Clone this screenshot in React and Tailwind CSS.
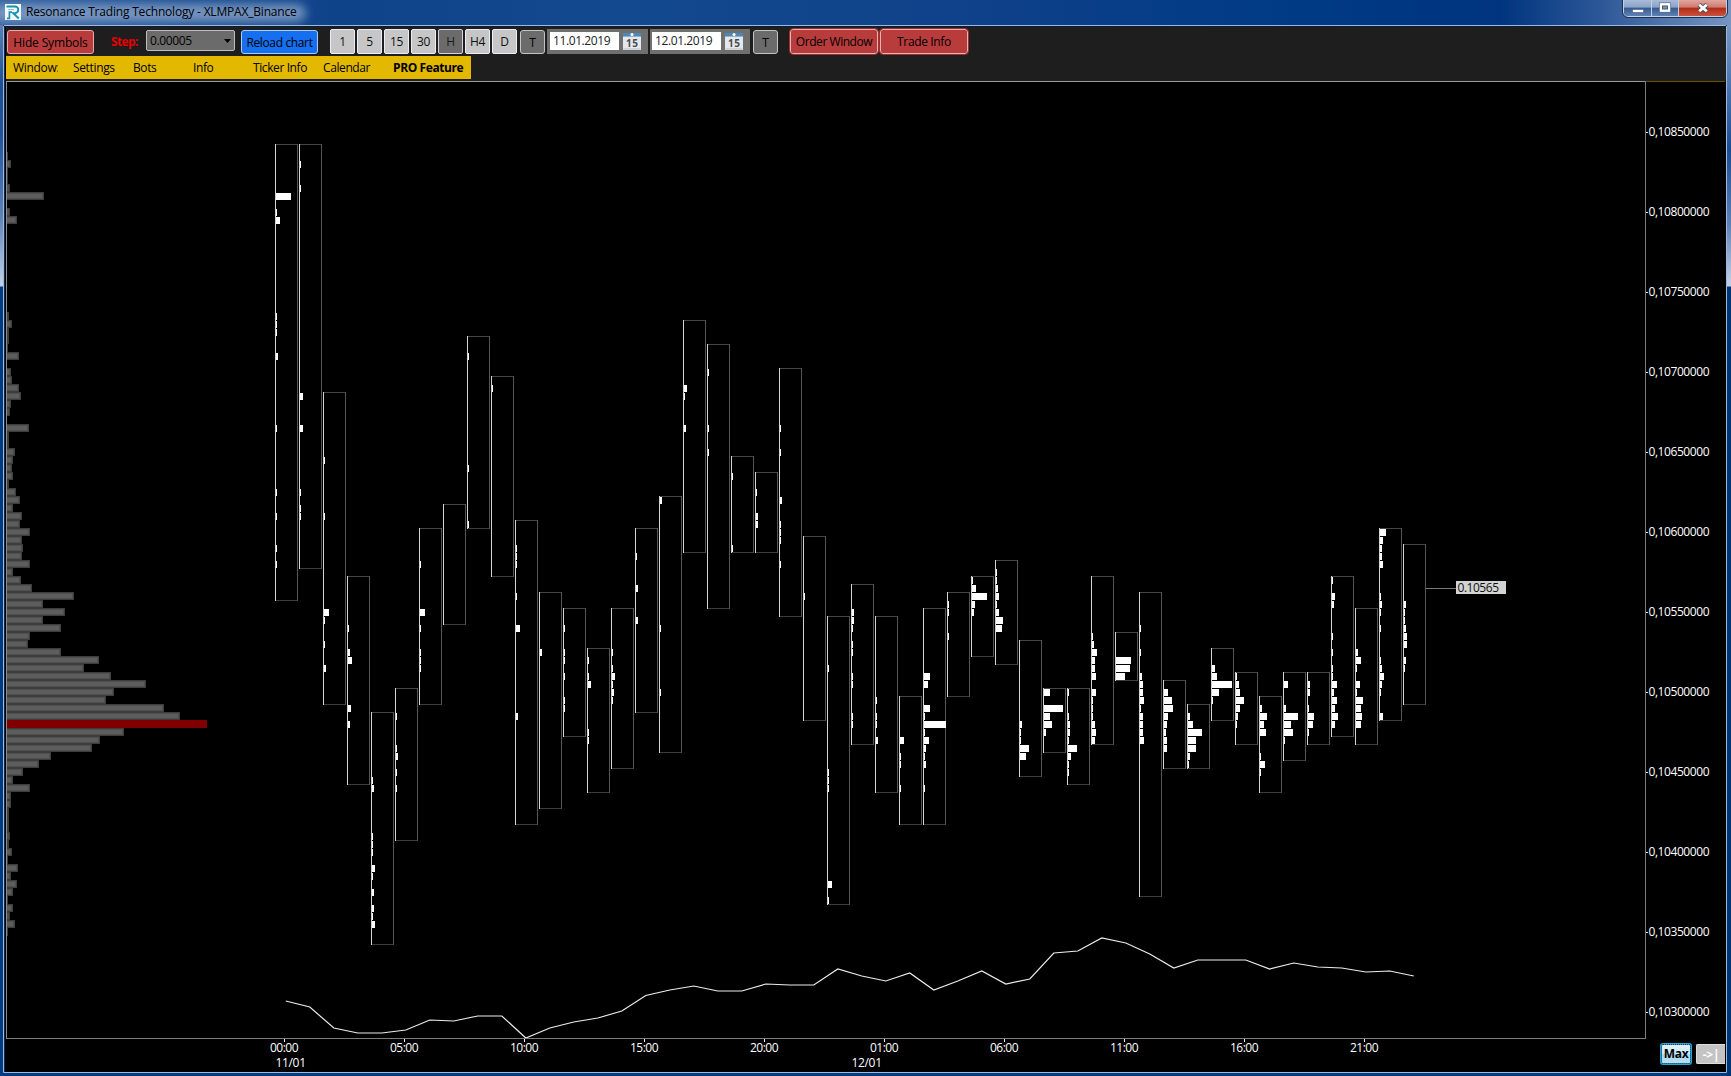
import React from "react";

const ROW_H = 8;
const ROW_TOP = 128;
const COL_W = 24;
const COL_LEFT = 275;

// [first row, last row, [row, width, row, width, ...]]
const CLUSTERS = [
  [2, 59, [8, 15, 10, 1, 11, 4, 23, 1, 24, 1, 25, 1, 28, 2, 37, 1, 45, 1, 48, 1, 52, 1, 54, 1]],
  [2, 55, [4, 1, 7, 1, 33, 3, 37, 3, 45, 1, 47, 1, 48, 1]],
  [33, 72, [41, 1, 48, 1, 60, 5, 61, 1, 64, 1, 67, 2]],
  [56, 82, [62, 1, 65, 2, 66, 4, 72, 3, 74, 2]],
  [73, 102, [81, 1, 82, 2, 88, 1, 89, 1, 90, 1, 92, 3, 93, 1, 95, 2, 97, 2, 98, 1, 99, 3]],
  [70, 89, [73, 1, 77, 1, 78, 2, 80, 1, 82, 1]],
  [50, 72, [54, 1, 60, 5, 62, 1, 65, 1, 66, 1, 67, 1]],
  [47, 62, []],
  [26, 50, [28, 1, 42, 1, 49, 1]],
  [31, 56, [32, 1]],
  [49, 87, [52, 1, 53, 1, 54, 1, 58, 1, 62, 4, 73, 2]],
  [58, 85, [65, 2]],
  [60, 76, [62, 1, 65, 1, 66, 1, 68, 1, 71, 1, 72, 1]],
  [65, 83, [66, 1, 68, 1, 69, 3, 75, 1, 76, 1]],
  [60, 80, [65, 1, 67, 1, 68, 3, 69, 1, 70, 2, 71, 1]],
  [50, 73, [53, 1, 57, 2, 61, 2]],
  [46, 78, [46, 2, 62, 1, 70, 1]],
  [24, 53, [32, 3, 33, 1, 37, 2]],
  [27, 60, [30, 1, 37, 1, 40, 1]],
  [41, 53, [43, 1, 52, 1]],
  [43, 53, [45, 1, 48, 2, 49, 2]],
  [30, 61, [37, 1, 40, 1, 46, 2, 49, 1, 50, 1, 51, 1, 54, 1]],
  [51, 74, [58, 1]],
  [61, 97, [67, 1, 80, 1, 81, 1, 82, 1, 94, 4, 96, 1]],
  [57, 77, [60, 2, 61, 2, 62, 1, 64, 1, 65, 1, 68, 1, 69, 1, 73, 1, 74, 1]],
  [61, 83, [71, 1, 73, 1, 74, 1, 76, 2]],
  [71, 87, [76, 4, 78, 1, 79, 1, 82, 1]],
  [60, 87, [68, 6, 69, 4, 72, 6, 73, 1, 74, 22, 75, 1, 76, 5, 77, 2, 78, 1, 79, 2, 82, 1]],
  [58, 71, [59, 1, 60, 1, 63, 1]],
  [56, 66, [56, 1, 57, 4, 58, 15, 59, 3, 60, 2]],
  [54, 67, [55, 1, 56, 1, 57, 2, 58, 3, 59, 1, 60, 3, 61, 7, 62, 6]],
  [64, 81, [74, 2, 75, 1, 76, 1, 77, 9, 78, 6]],
  [70, 78, [70, 6, 72, 19, 73, 6, 74, 8, 75, 2]],
  [70, 82, [70, 1, 73, 1, 74, 2, 75, 2, 76, 1, 77, 9, 78, 3, 79, 1, 80, 1]],
  [56, 77, [63, 1, 64, 2, 65, 5, 66, 3, 67, 3, 68, 4, 70, 4, 71, 1, 72, 1, 73, 1, 74, 3, 75, 4, 76, 3]],
  [63, 69, [66, 15, 67, 14, 68, 9]],
  [58, 96, [62, 1, 65, 1, 68, 2, 69, 3, 70, 3, 71, 4, 72, 1, 73, 3, 74, 3, 75, 3, 76, 4]],
  [69, 80, [70, 4, 71, 8, 72, 9, 73, 4, 74, 3, 75, 2, 76, 3, 77, 3]],
  [72, 80, [73, 2, 74, 5, 75, 14, 76, 8, 77, 8, 78, 2, 79, 1]],
  [65, 74, [67, 3, 68, 5, 69, 20, 70, 7, 71, 1]],
  [68, 77, [68, 1, 69, 3, 70, 4, 71, 8, 72, 4, 73, 2, 74, 1]],
  [71, 83, [72, 2, 73, 7, 74, 4, 75, 6, 78, 1, 79, 5, 80, 1]],
  [68, 79, [69, 4, 72, 2, 73, 14, 74, 7, 75, 9, 76, 1]],
  [68, 77, [69, 2, 70, 2, 72, 1, 73, 6, 74, 5, 75, 1]],
  [56, 76, [56, 1, 58, 3, 59, 2, 63, 1, 65, 1, 67, 1, 68, 1, 69, 5, 70, 2, 71, 5, 72, 3, 73, 6, 74, 3]],
  [60, 77, [65, 2, 66, 5, 67, 1, 69, 4, 70, 1, 71, 7, 72, 5, 73, 6, 74, 5]],
  [50, 74, [50, 6, 51, 3, 52, 2, 53, 2, 54, 3, 58, 1, 59, 2, 60, 1, 62, 1, 66, 1, 67, 2, 68, 4, 69, 2, 70, 1, 73, 3]],
  [52, 72, [59, 2, 60, 1, 61, 1, 62, 2, 63, 3, 64, 3, 66, 2, 67, 1]],
];

// volume per price row, starting at row 3
const PROFILE = [
  1, 4, 1, 1, 3, 37, 0, 3, 10, 0, 0, 0, 0, 0, 0, 0, 0, 0, 0, 0, 2, 5, 2, 2, 1,
  12, 0, 4, 5, 12, 14, 4, 3, 0, 22, 2, 2, 8, 6, 5, 6, 2, 9, 13, 6, 15, 13, 23,
  15, 16, 15, 23, 6, 14, 25, 67, 36, 58, 36, 54, 23, 21, 54, 92, 77, 104, 139,
  107, 99, 157, 173, 200, 117, 93, 85, 44, 32, 16, 6, 23, 4, 4, 2, 2, 2, 3, 2,
  5, 1, 11, 4, 10, 6, 1, 6, 3, 8, 1,
];

const DELTA = [
  1001, 1007, 1028, 1033, 1033, 1030, 1020, 1021, 1016, 1016, 1038, 1028,
  1022, 1018, 1011, 995.5, 990, 986, 991, 991, 984, 985, 985, 969, 976, 981,
  973, 990, 981, 971, 984, 979, 953, 951, 938, 943, 954, 968, 960, 960, 960,
  969, 963, 967, 968, 972, 971, 976,
];

const HOURS = ["00:00", "05:00", "10:00", "15:00", "20:00", "01:00", "06:00", "11:00", "16:00", "21:00"];

const PRICES = [
  "0,10850000",
  "0,10800000",
  "0,10750000",
  "0,10700000",
  "0,10650000",
  "0,10600000",
  "0,10550000",
  "0,10500000",
  "0,10450000",
  "0,10400000",
  "0,10350000",
  "0,10300000",
];

export default function App() {
  return (
    <div className="flex h-[1076px] w-[1731px] flex-col overflow-hidden bg-[#003a80] font-['Open_Sans','Noto_Sans',sans-serif] text-[12px] text-black">
      <TitleBar />
      <div className="flex h-[1051px]">
        <div className="h-full w-[3px] bg-[linear-gradient(180deg,#5b80b4_0px,#1c4f93_60px,#22539a_110px,#5c81b6_190px,#b4c6e0_250px,#c2d0e6_261px,#003c82_262px)]" />
        <div className="flex h-[1048px] w-[1724px] flex-col rounded-t-[2px] border border-[#9fb9dc] bg-black">
          <div className="h-px bg-[#0b1c38]" />
          <div className="flex h-full border-l border-[#0a2a58] pl-px">
            <div className="flex w-[1720px] flex-col">
              <Toolbar />
              <Menu />
              <div className="flex h-[990px]">
                <ClusterChart />
                <PriceScale />
              </div>
            </div>
          </div>
        </div>
        <div className="h-full w-[4px] bg-[linear-gradient(180deg,#7797c4_0px,#4c76b0_60px,#1a4c92_125px,#5d82b7_200px,#b4c6e0_250px,#c2d0e6_261px,#003575_262px)]" />
      </div>
    </div>
  );
}

const TitleBar = () => (
  <div className="relative flex h-[25px] items-start justify-between overflow-hidden bg-[linear-gradient(90deg,#2f5f9f_0px,#0f4389_330px,#13498f_620px,#0e4189_980px,#003a85_1300px,#00347e_1500px,#2c5797_1600px,#7794c0_1731px)]">
    <div className="absolute top-[4px] -left-2 h-[18px] w-[314px] rounded-full bg-[#8ba5cb]/80 blur-[5px]" />
    <div className="relative flex items-center pt-1 pl-[5px]">
      <Logo />
      <span className="ml-[5px] text-[12px] leading-4 tracking-[-0.19px] whitespace-nowrap">
        Resonance Trading Technology - XLMPAX_Binance
      </span>
    </div>
    <WindowButtons />
  </div>
);

const Logo = () => (
  <svg width="16" height="16" viewBox="0 0 16 16">
    <rect width="16" height="16" fill="#f4f8fa" />
    <path d="M1.5 2.5H10a3.3 3.3 0 0 1 0 6.6H8.2l5.6 5.4" fill="none" stroke="#1593b5" strokeWidth="1.9" />
    <path d="M2 14.3h2.4V8.2H7" fill="none" stroke="#1593b5" strokeWidth="1.7" />
    <path d="M3 5.6h6" stroke="#7cc3d6" strokeWidth="1" />
  </svg>
);

const WindowButtons = () => (
  <div className="relative mr-[4px] flex h-[17px] overflow-hidden rounded-b-[5px] border border-t-0 border-[#c3d1e6] text-white outline outline-[#1c3158]">
    <div className="flex w-[28px] items-center justify-center border-r border-[#c3d1e6] bg-[linear-gradient(180deg,#a9bbd8_0%,#8ba3c8_45%,#365a90_50%,#5f82b4_100%)]">
      <svg width="12" height="10" viewBox="0 0 12 10">
        <rect x="0.5" y="6.5" width="11" height="3" fill="#fff" stroke="#46587a" strokeWidth="0.6" />
      </svg>
    </div>
    <div className="flex w-[27px] items-center justify-center border-r border-[#c3d1e6] bg-[linear-gradient(180deg,#a9bbd8_0%,#8ba3c8_45%,#365a90_50%,#5f82b4_100%)]">
      <svg width="12" height="12" viewBox="0 0 12 12">
        <rect x="0.3" y="0.8" width="11.4" height="9.4" fill="#fff" stroke="#46587a" strokeWidth="0.6" />
        <rect x="3.5" y="4" width="5" height="3" fill="#7894bd" stroke="#46587a" />
      </svg>
    </div>
    <div className="flex w-[47px] items-center justify-center bg-[linear-gradient(180deg,#dfa79f_0%,#cf7a6c_45%,#b02c17_50%,#c9523c_100%)]">
      <svg width="12" height="11" viewBox="0 0 12 11">
        <path d="M2 1.5l8 7M10 1.5l-8 7" stroke="#4f4c5c" strokeWidth="4.4" />
        <path d="M2.2 1.7l7.6 6.6M9.8 1.7L2.2 8.3" stroke="#fff" strokeWidth="2.8" />
      </svg>
    </div>
  </div>
);

const Toolbar = () => (
  <div className="flex h-[29px] items-start bg-[#1e1e1e] pt-[2px] pl-px">
    <button className="mt-px h-[24px] w-[87px] rounded-[3px] border border-[#e9a9a9] bg-[#b83c3c] text-[12px] leading-[23px] tracking-[-0.15px] whitespace-nowrap">
      Hide Symbols
    </button>
    <span className="ml-[17px] w-[35px] pt-[5px] text-[12px] leading-4 font-bold tracking-[-0.6px] text-[#e60000]">
      Step:
    </span>
    <div className="mt-px flex h-[21px] w-[89px] items-center justify-between rounded-[2px] border border-[#bdbdbd] bg-[#6b6b6b] pr-[3px] pl-[3px]">
      <span className="tracking-[-0.35px]">0.00005</span>
      <svg width="7" height="4" viewBox="0 0 7 4">
        <path d="M0 0h7L3.5 4z" fill="#000" />
      </svg>
    </div>
    <button className="mt-px ml-[6px] h-[24px] w-[77px] rounded-[3px] border border-[#a9cbf5] bg-[#156fee] text-[12px] leading-[23px] tracking-[-0.36px] whitespace-nowrap">
      Reload chart
    </button>
    <div className="ml-[12px] flex gap-[2px]">
      <Period label="1" />
      <Period label="5" />
      <Period label="15" />
      <Period label="30" />
      <Period label="H" active />
      <Period label="H4" />
      <Period label="D" />
    </div>
    <TickButton className="ml-[3px]" />
    <DateBox value="11.01.2019" className="ml-[2px] w-[101px] pl-[3px]" />
    <DateBox value="12.01.2019" className="ml-[2px] w-[100px] pl-[2px]" />
    <TickButton className="ml-[3px]" />
    <button className="ml-[12px] h-[25px] w-[88px] rounded-[3px] border border-[#e9b3b3] bg-[#b83c3c] text-[12px] leading-[24px] tracking-[-0.45px] whitespace-nowrap outline outline-[#a03030]">
      Order Window
    </button>
    <button className="ml-[2px] h-[25px] w-[88px] rounded-[3px] border border-[#e9b3b3] bg-[#b83c3c] text-[12px] leading-[24px] tracking-[-0.35px] whitespace-nowrap outline outline-[#a03030]">
      Trade Info
    </button>
  </div>
);

const Period = ({ label, active }) => (
  <button
    className={
      "h-[25px] w-[25px] rounded-[2px] border text-center text-[12px] leading-[24px] tracking-[-0.3px] " +
      (active
        ? "border-[#d8d0de] bg-[#6b6b6b] text-[#1c1c1c]"
        : "border-[#f0ecf4] bg-[#c6c6c6] text-[#111]")
    }
  >
    {label}
  </button>
);

const TickButton = ({ className }) => (
  <button
    className={
      "mt-px h-[24px] w-[25px] rounded-[3px] border border-[#c4c4c4] bg-[#6b6b6b] text-[12px] leading-[23px] " +
      className
    }
  >
    T
  </button>
);

const DateBox = ({ value, className }) => (
  <div className={"flex h-[25px] items-start bg-[#6f6f6f] pt-[3px] " + className}>
    <span className="h-[18px] w-[69px] bg-white pl-[3px] text-[12px] leading-[17px] tracking-[-0.4px] text-[#222]">
      {value}
    </span>
    <svg className="ml-[4px]" width="18" height="18" viewBox="0 0 18 18">
      <rect y="1" width="18" height="3" fill="#4f87b8" />
      <rect y="4" width="18" height="1" fill="#8fb3d2" />
      <circle cx="9" cy="2.5" r="1.5" fill="#fff" />
      <rect y="5" width="18" height="13" fill="#e4e8ec" />
      <rect x="0.5" y="16.5" width="17" height="1" fill="#b9c0c8" />
      <text x="3" y="15" fontSize="10" fontWeight="bold" fill="#4a4a4a" textLength="12">
        15
      </text>
    </svg>
  </div>
);

const Menu = () => (
  <div className="h-[25px] bg-[#1e1e1e]">
    <div className="flex h-[23px] w-[465px] bg-[#e3b800] pl-[7px] text-[12px] leading-[23px] whitespace-nowrap">
      <span className="w-[60px] tracking-[-0.3px]">
        <span className="block w-[45px] overflow-hidden">Window:</span>
      </span>
      <span className="w-[60px] tracking-[-0.35px]">Settings</span>
      <span className="w-[60px] tracking-[-0.4px]">Bots</span>
      <span className="w-[60px] tracking-[-0.4px]">Info</span>
      <span className="w-[70px] tracking-[-0.4px]">Ticker Info</span>
      <span className="w-[70px] tracking-[-0.4px]">Calendar</span>
      <span className="font-bold tracking-[-0.4px]">PRO Feature</span>
    </div>
  </div>
);

// viewBox starts at the panel's window position, so drawing uses window pixels
const ClusterChart = () => (
  <svg width="1640" height="990" viewBox="6 81 1640 990" shapeRendering="crispEdges">
    <rect x="6" y="81" width="1640" height="990" fill="#000" />

    {PROFILE.map((w, i) => {
      const y = ROW_TOP + (i + 3) * ROW_H;
      if (!w) return null;
      if (w === 200) return <rect key={i} x="7" y={y} width={w} height="8" fill="#800000" />;
      return (
        <g key={i}>
          <rect x="7" y={y} width={w} height="8" fill="#3d3d3d" />
          {w > 2 && <rect x="7" y={y + 1} width={w - 1} height="6" fill="#505050" />}
          {w > 3 && <rect x="7" y={y + 2} width={w - 2} height="4" fill="#5d5d5d" />}
        </g>
      );
    })}

    {CLUSTERS.map(([top, bottom, bars], i) => {
      const x = COL_LEFT + i * COL_W;
      const y1 = ROW_TOP + top * ROW_H;
      const y2 = ROW_TOP + bottom * ROW_H;
      const cells = [];
      for (let j = 0; j < bars.length; j += 2) {
        cells.push(
          <rect key={j} x={x + 1} y={ROW_TOP + 1 + bars[j] * ROW_H} width={bars[j + 1]} height="7" fill="#fff" />
        );
      }
      return (
        <g key={i}>
          <rect x={x} y={y1} width="23" height="1" fill="#464646" />
          <rect x={x} y={y2} width="23" height="1" fill="#3c3c3c" />
          <rect x={x + 22} y={y1} width="1" height={y2 - y1 + 1} fill="#555" />
          <rect x={x} y={y1} width="1" height={y2 - y1 + 1} fill="#d2d2d2" />
          {cells}
        </g>
      );
    })}

    <polyline
      points={DELTA.map((y, i) => `${285.8 + i * COL_W},${y}`).join(" ")}
      fill="none"
      stroke="#ececec"
      strokeWidth="1.2"
      shapeRendering="auto"
    />

    {/* last price */}
    <rect x="1426" y="588" width="30" height="1" fill="#7a7a7a" />
    <rect x="1456" y="581" width="50" height="13" fill="#d3d3d3" />
    <text x="1457.5" y="592" fontSize="12" fill="#111" textLength="41.5">
      0.10565
    </text>

    {/* axes */}
    <rect x="6" y="81" width="1640" height="1" fill="#9a9a9a" />
    <rect x="6" y="81" width="1" height="958" fill="#8c8c8c" />
    <rect x="6" y="1038" width="1640" height="1" fill="#7c7c7c" />
    <rect x="1645" y="81" width="1" height="958" fill="#7c7c7c" />
    {HOURS.map((h, i) => (
      <g key={h}>
        <rect x={284 + i * 120} y="1039" width="1" height="3" fill="#eee" />
        <text x={270 + i * 120} y="1052" fontSize="12" fill="#fff" textLength="28.5">
          {h}
        </text>
      </g>
    ))}
    <text x="275.5" y="1067" fontSize="12" fill="#fff" textLength="30.5">
      11/01
    </text>
    <text x="851.5" y="1067" fontSize="12" fill="#fff" textLength="30.5">
      12/01
    </text>
  </svg>
);

const PriceScale = () => (
  <div className="flex w-[79px] flex-col bg-black">
    <svg width="79" height="962" viewBox="1646 81 79 962">
      <rect x="1646" y="81" width="79" height="1" fill="#6b5200" />
      {PRICES.map((p, i) => (
        <g key={p}>
          <rect x="1646" y={132 + i * 80} width="2" height="1" fill="#eee" />
          <text x="1648.5" y={136 + i * 80} fontSize="12" fill="#fff" textLength="61">
            {p}
          </text>
        </g>
      ))}
    </svg>
    <div className="flex items-start gap-[4px] pl-[14px]">
      <button className="h-[22px] w-[32px] rounded-[3px] border-2 border-[#1fa8e0] bg-[linear-gradient(180deg,#e2f1fa_0%,#d0e8f6_50%,#a9d8f0_50%,#b8def2_100%)] text-[12px] leading-[18px] font-bold tracking-[-0.3px] outline-1 -outline-offset-2 outline-dotted outline-[#333]">
        Max
      </button>
      <button className="mt-px h-[20px] w-[29px] rounded-l-[2px] border border-r-0 border-[#dedede] bg-[#c4c4c4] text-[12px] leading-[19px] font-bold tracking-[-0.3px] text-white">
        {"->|"}
      </button>
    </div>
  </div>
);
